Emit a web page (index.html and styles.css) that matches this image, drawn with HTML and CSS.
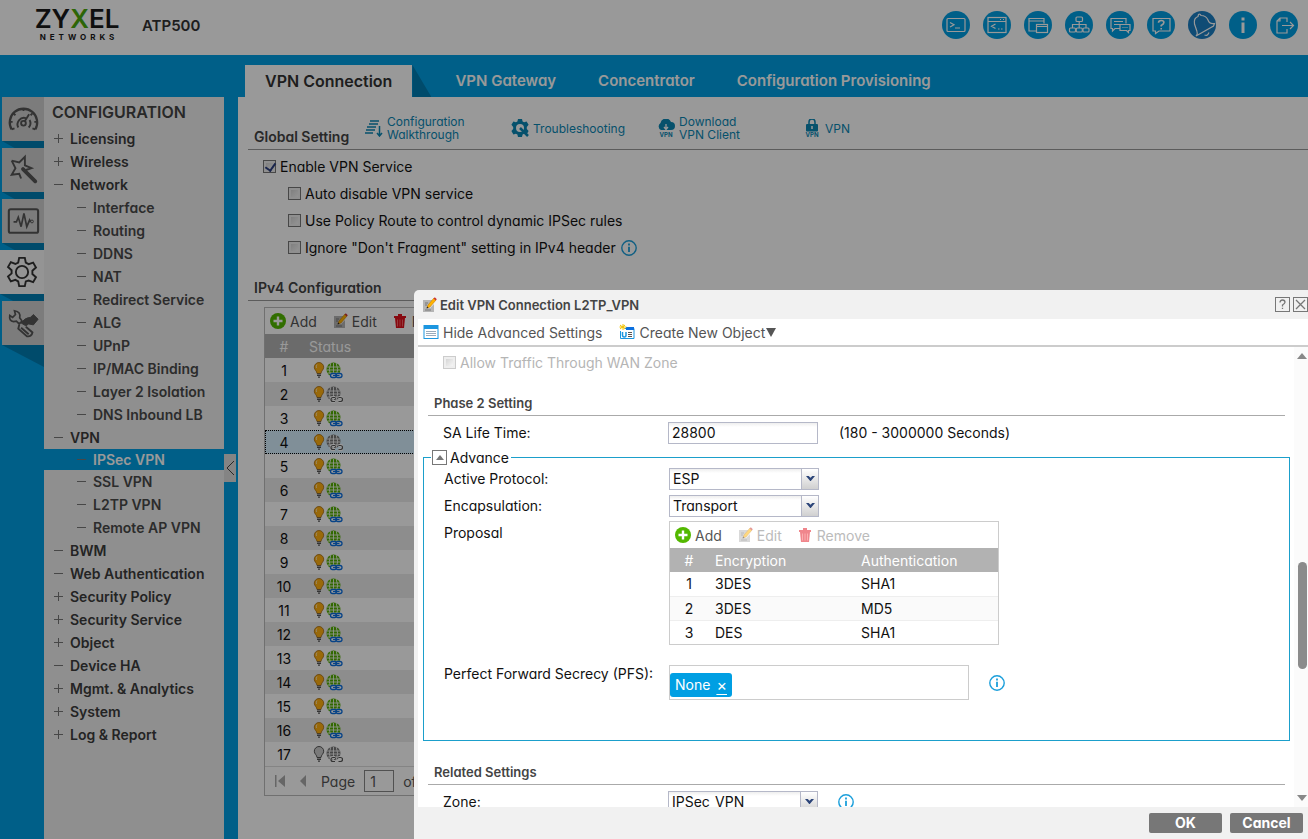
FILE: index.html
```html
<!DOCTYPE html>
<html lang="en">
<head>
    <meta charset="UTF-8">
    <meta name="viewport" content="width=device-width, initial-scale=1.0">
    <title>ATP500 - VPN Connection</title>
    <link rel="stylesheet" href="styles.css">
</head>
<body>
    <!-- Shared icons -->
    <svg class="sprite" aria-hidden="true">
        <symbol id="i-add" viewBox="0 0 16 16"><circle cx="8" cy="8" r="8" fill="#53b800"/><path d="M8 3.500v9M3.500 8h9" stroke="#fff" stroke-width="2.400"/></symbol>
        <symbol id="i-edit" viewBox="0 0 16 16"><path d="M2 3h9v2L7 9v2h2l4-4v8H2z" fill="#b5b5b5"/><path d="M4 6h3M4 8h2M4 13h6" stroke="#777"/><path d="M6 11l1-3 6-7 2 2-6 7z" fill="#ffb400" stroke="#c77a00" stroke-width=".6"/><path d="M12.600 1.400L13.800.3l2 2-1.100 1.100z" fill="#c33"/><path d="M5.500 11.500l.7-2 1.300 1.300z" fill="#222"/></symbol>
        <symbol id="i-trash" viewBox="0 0 16 16"><path d="M2 3h12v2H2zM6 1h4v2H6z" fill="#e2101c"/><path d="M3 5h10l-1 10H4z" fill="#e2101c"/><path d="M5.500 6.500v7M8 6.500v7M10.500 6.500v7" stroke="#f77" stroke-width=".8"/></symbol>
        <symbol id="i-bulb" viewBox="0 0 12 16"><path d="M6 .5a4.700 4.700 0 0 0-4.700 4.700C1.300 8 4 9 4 11.500h4C8 9 10.700 8 10.700 5.200A4.700 4.700 0 0 0 6 .5z" fill="currentColor" stroke="#a46a10" stroke-width=".8"/><path d="M4 2.500Q2.800 4 3.500 6" stroke="#fff" fill="none" opacity=".6"/><path d="M4 12h4M4 13.500h4M5 15.200h2" stroke="#555" stroke-width="1.200"/></symbol>
        <symbol id="i-bulb-off" viewBox="0 0 12 16"><path d="M6 .5a4.700 4.700 0 0 0-4.700 4.700C1.300 8 4 9 4 11.500h4C8 9 10.700 8 10.700 5.200A4.700 4.700 0 0 0 6 .5z" fill="#ccc" stroke="#555"/><path d="M4 12h4M4 13.500h4M5 15.200h2" stroke="#555" stroke-width="1.200"/></symbol>
        <symbol id="i-globe" viewBox="0 0 17 17"><circle cx="7.500" cy="7.500" r="7" fill="currentColor"/><path d="M1 5h13M.5 8h14M2 11h11M7.500 1v13M4.800 1q-3 6.500 0 13M10.200 1q3 6.500 0 13" fill="none" stroke="#fff" stroke-width=".8"/></symbol>
        <symbol id="i-link" viewBox="0 0 17 17"><rect x="4.500" y="11.500" width="6" height="4" rx="2" fill="#fff" stroke="#0b6fe0" stroke-width="1.300"/><rect x="10" y="11.500" width="6" height="4" rx="2" fill="#fff" stroke="#0b6fe0" stroke-width="1.300"/><path d="M7 13.500h6.500" stroke="#0b6fe0"/></symbol>
        <symbol id="i-unlink" viewBox="0 0 17 17"><path d="M9 11.500H7a2 2 0 0 0 0 4h2M12.500 11.500h2a2 2 0 0 1 0 4h-2" fill="none" stroke="#fff" stroke-width="3"/><path d="M9 11.500H7a2 2 0 0 0 0 4h2M12.500 11.500h2a2 2 0 0 1 0 4h-2" fill="none" stroke="#555" stroke-width="1.200"/></symbol>
        <symbol id="i-on" viewBox="0 0 30 17"><use href="#i-bulb" x="0" y="0" width="12" height="16" color="#ffb010"/><use href="#i-globe" x="13" y="0" width="17" height="17" color="#52ae00"/><use href="#i-link" x="13" y="0" width="17" height="17"/></symbol>
        <symbol id="i-half" viewBox="0 0 30 17"><use href="#i-bulb" x="0" y="0" width="12" height="16" color="#ffb010"/><use href="#i-globe" x="13" y="0" width="17" height="17" color="#777"/><use href="#i-unlink" x="13" y="0" width="17" height="17"/></symbol>
        <symbol id="i-off" viewBox="0 0 30 17"><use href="#i-bulb-off" x="0" y="0" width="12" height="16"/><use href="#i-globe" x="13" y="0" width="17" height="17" color="#777"/><use href="#i-unlink" x="13" y="0" width="17" height="17"/></symbol>
        <symbol id="i-info" viewBox="0 0 16 16"><circle cx="8" cy="8" r="7.200" fill="none" stroke="#1b9fdb" stroke-width="1.400"/><path d="M8 3.500v2M8 6.800V12" stroke="#1b9fdb" stroke-width="1.800"/></symbol>
    </svg>

    <header class="topbar">
        <div class="logo">
            <span class="logo-name">ZY<span class="logo-x">X</span>EL</span>
            <span class="logo-sub">NETWORKS</span>
        </div>
        <span class="model">ATP500</span>
        <div class="top-actions">
            <button class="round-btn" aria-label="Console"><svg viewBox="0 0 28 28"><rect x="5" y="7.500" width="18" height="13" rx="1"/><path d="M8 11.500l4 2.300-4 2.300M13 17h5"/></svg></button>
            <button class="round-btn" aria-label="CLI"><svg viewBox="0 0 28 28"><rect x="5" y="6.500" width="18" height="15"/><path d="M5 10.500h18M17 8.500h1M20 8.500h1M12.500 13l-4 2.300 4 2.300M15 18h1.500M18 18h1.500"/></svg></button>
            <button class="round-btn" aria-label="Windows"><svg viewBox="0 0 28 28"><path d="M12.500 20H5V7.500h15v5M5 10h15"/><rect x="12.500" y="13.500" width="11" height="8"/><path d="M12.500 15.500h11"/></svg></button>
            <button class="round-btn" aria-label="Site map"><svg viewBox="0 0 28 28"><rect x="11" y="6" width="6.500" height="4.500" rx="1"/><rect x="4.500" y="17" width="6" height="4" rx="1"/><rect x="11.300" y="17" width="6" height="4" rx="1"/><rect x="18" y="17" width="6" height="4" rx="1"/><path d="M14.200 10.500V17M7.500 17v-3.500h13.500V17"/></svg></button>
            <button class="round-btn" aria-label="Forum"><svg viewBox="0 0 28 28"><path d="M14 17.500H9L6.500 20v-2.500H5v-10h15v5M8 10.500h9M8 13.500h6"/><path d="M14 13.500h10v6h-1.500v2l-2-2H14zM16.500 16.500h1M18.500 16.500h1M20.500 16.500h1"/></svg></button>
            <button class="round-btn" aria-label="Help"><svg viewBox="0 0 28 28"><path d="M6 7.500h17v12.500H12L8.500 22.500V20H6z"/><path d="M11.500 11.800q0-2.300 2.700-2.300t2.700 2q0 1.500-2.700 3v1M14.200 17v1.500" stroke-width="1.600"/></svg></button>
            <button class="round-btn round-btn-light" aria-label="Notifications"><svg viewBox="0 0 28 28"><path d="M8 25q2-2 1-4.500L6.500 13Q5.500 7 10 5.500l.5-2q1.500-1 2.500 1 5 0 7 4.500 1.500 4.500 6.500 3.500l-1 2.500zM16.500 24q3 1.500 4.500-2.500"/></svg></button>
            <button class="round-btn" aria-label="About"><svg viewBox="0 0 28 28"><path d="M14 6.500v3M14 11.500v10.500" stroke-width="3"/></svg></button>
            <button class="round-btn" aria-label="Logout"><svg viewBox="0 0 28 28"><path d="M17 11V7h-7L7 10v12h10v-4M12 14.500h11M20 11l3.500 3.500L20 18M10 7v3H7"/></svg></button>
        </div>
    </header>

    <nav class="tabs">
        <a href="#" class="tab active">VPN Connection</a>
        <a href="#" class="tab">VPN Gateway</a>
        <a href="#" class="tab">Concentrator</a>
        <a href="#" class="tab">Configuration Provisioning</a>
    </nav>

    <div class="layout">
        <div class="rail">
            <button class="rail-btn" aria-label="Dashboard"><svg viewBox="0 0 36 36"><path d="M6 29a14.500 14.500 0 1 1 25 0" stroke-width="2.400"/><path d="M6 29l3-1M31 29l-3-1M4 21h3M30 21h3M8 12l2 2M18.500 6.500v3M28 12l-2 2M13 27a7 7 0 0 1 8-10M25 19a7 7 0 0 1-1 8M19.500 21l5-8" stroke-width="2"/><circle cx="18.500" cy="22.500" r="2.500" stroke-width="2"/></svg></button>
            <button class="rail-btn" aria-label="Quick setup"><svg viewBox="0 0 36 36"><path d="M6 8l8 2 6-6v9l7 3-6 2M6 8l4 8-4 7 8-1 2 5" stroke-width="2"/><path d="M18 17l13 13" stroke-width="4" stroke-linecap="round"/></svg></button>
            <button class="rail-btn" aria-label="Monitor"><svg viewBox="0 0 36 36"><rect x="3" y="5.500" width="31" height="25" rx="2" stroke-width="2.200"/><path d="M8 19h3l2-5 3 10 3-14 3 14 3-7 1 2" stroke-width="1.800"/><circle cx="27.500" cy="18.500" r="1.500"/></svg></button>
            <button class="rail-btn active" aria-label="Configuration"><svg viewBox="0 0 36 36"><path d="M15 3h6l1 5 3 1.700 4.800-1.600 3 5.200-3.800 3.400v3.400l3.800 3.400-3 5.200-4.800-1.600L22 28l-1 5h-6l-1-5-3-1.700-4.800 1.600-3-5.200L7 19.500v-3.400l-3.800-3.400 3-5.200L11 9.500 14 8z" stroke-width="2"/><circle cx="18" cy="18" r="6.500" stroke-width="2"/></svg></button>
            <button class="rail-btn" aria-label="Maintenance"><svg viewBox="0 0 36 36"><path d="M9 5l1 4-3 3-3-2q-1 6 4 6.500l3-.5 3 3 3-3-2.500-3.500Q16 6 9 5z" stroke-width="1.800"/><path d="M16 18q4-6 10-6l3-3 5 5-5 6-5-1-3 2z" fill="currentColor"/><path d="M16 23l8 7M14 20l-1 4 9 8q5 1 6-4l-7-6" stroke-width="2"/></svg></button>
        </div>

        <aside class="sidebar">
            <h1 class="sidebar-title">CONFIGURATION</h1>
            <ul class="menu">
                <li><a href="#" class="menu-link plus">Licensing</a></li>
                <li><a href="#" class="menu-link plus">Wireless</a></li>
                <li><a href="#" class="menu-link">Network</a>
                    <ul class="submenu">
                        <li><a href="#" class="menu-link">Interface</a></li>
                        <li><a href="#" class="menu-link">Routing</a></li>
                        <li><a href="#" class="menu-link">DDNS</a></li>
                        <li><a href="#" class="menu-link">NAT</a></li>
                        <li><a href="#" class="menu-link">Redirect Service</a></li>
                        <li><a href="#" class="menu-link">ALG</a></li>
                        <li><a href="#" class="menu-link">UPnP</a></li>
                        <li><a href="#" class="menu-link">IP/MAC Binding</a></li>
                        <li><a href="#" class="menu-link">Layer 2 Isolation</a></li>
                        <li><a href="#" class="menu-link">DNS Inbound LB</a></li>
                    </ul>
                </li>
                <li><a href="#" class="menu-link">VPN</a>
                    <ul class="submenu">
                        <li><a href="#" class="menu-link current">IPSec VPN</a></li>
                        <li><a href="#" class="menu-link">SSL VPN</a></li>
                        <li><a href="#" class="menu-link">L2TP VPN</a></li>
                        <li><a href="#" class="menu-link">Remote AP VPN</a></li>
                    </ul>
                </li>
                <li><a href="#" class="menu-link">BWM</a></li>
                <li><a href="#" class="menu-link">Web Authentication</a></li>
                <li><a href="#" class="menu-link plus">Security Policy</a></li>
                <li><a href="#" class="menu-link plus">Security Service</a></li>
                <li><a href="#" class="menu-link plus">Object</a></li>
                <li><a href="#" class="menu-link">Device HA</a></li>
                <li><a href="#" class="menu-link plus">Mgmt. &amp; Analytics</a></li>
                <li><a href="#" class="menu-link plus">System</a></li>
                <li><a href="#" class="menu-link plus">Log &amp; Report</a></li>
            </ul>
            <button class="collapse-btn" aria-label="Collapse menu"><svg viewBox="0 0 12 28"><path d="M10 7L3 14l7 7"/></svg></button>
        </aside>

        <main class="content">
            <div class="section-head section-head-tall">
                <h2 class="section-title">Global Setting</h2>
                <div class="quick-links">
                    <a href="#" class="quick-link"><svg viewBox="0 0 18 18"><path d="M5 2h9M4 5h9M2 8h9M1 11h9M0 14h8" stroke="currentColor" stroke-width="1.300"/><path d="M14.500 7v10M12 14l2.500 3 2.500-3" fill="none" stroke="currentColor" stroke-width="1.500"/></svg><span>Configuration<br>Walkthrough</span></a>
                    <a href="#" class="quick-link"><svg viewBox="0 0 18 18"><path fill="currentColor" fill-rule="evenodd" d="M7 0h4l.6 2.500 1.500.8L15.600 2.500l2 3.300L15.800 8v2l1.800 2-2 3.500-2.500-.8-1.500.8L11 18H7l-.6-2.500-1.500-.8-2.500.8-2-3.500L2.200 10V8L.4 5.800l2-3.300 2.500.8 1.500-.8zM9 5a4 4 0 1 0 0 8 4 4 0 0 0 0-8z"/><path d="M9 9l8 8" stroke="currentColor" stroke-width="2.500"/></svg><span>Troubleshooting</span></a>
                    <a href="#" class="quick-link"><svg viewBox="0 0 18 18"><path d="M4 11a4 4 0 0 1-.5-7A5.500 5.500 0 0 1 14 3a4 4 0 0 1 0 8z" fill="currentColor"/><path d="M9 5v5M7 8l2 2.500L11 8" fill="none" stroke="#fff" stroke-width="1.300"/><text x="9" y="18" class="icon-text">VPN</text></svg><span>Download<br>VPN Client</span></a>
                    <a href="#" class="quick-link"><svg viewBox="0 0 18 18"><rect x="3" y="5" width="12" height="7.500" rx="1" fill="currentColor"/><path d="M6 5V3a3 3 0 0 1 6 0v2" fill="none" stroke="currentColor" stroke-width="1.500"/><path d="M9 7v3" stroke="#fff" stroke-width="1.500"/><text x="9" y="18" class="icon-text">VPN</text></svg><span>VPN</span></a>
                </div>
            </div>
            <div class="options">
                <label class="check"><input type="checkbox" checked>Enable VPN Service</label>
                <label class="check check-sub"><input type="checkbox">Auto disable VPN service</label>
                <label class="check check-sub"><input type="checkbox">Use Policy Route to control dynamic IPSec rules</label>
                <label class="check check-sub"><input type="checkbox">Ignore "Don't Fragment" setting in IPv4 header<svg class="icon info"><use href="#i-info"/></svg></label>
            </div>

            <div class="section-head">
                <h2 class="section-title">IPv4 Configuration</h2>
            </div>
            <div class="grid grid-main">
                <div class="grid-tools">
                    <button class="tool"><svg class="icon"><use href="#i-add"/></svg>Add</button>
                    <button class="tool"><svg class="icon"><use href="#i-edit"/></svg>Edit</button>
                    <button class="tool"><svg class="icon"><use href="#i-trash"/></svg>Remove</button>
                </div>
                <table class="grid-table">
                    <thead><tr><th class="col-num">#</th><th>Status</th></tr></thead>
                    <tbody>
                        <tr><td class="col-num">1</td><td><svg class="status"><use href="#i-on"/></svg></td></tr>
                        <tr><td class="col-num">2</td><td><svg class="status"><use href="#i-half"/></svg></td></tr>
                        <tr><td class="col-num">3</td><td><svg class="status"><use href="#i-on"/></svg></td></tr>
                        <tr class="selected"><td class="col-num">4</td><td><svg class="status"><use href="#i-half"/></svg></td></tr>
                        <tr><td class="col-num">5</td><td><svg class="status"><use href="#i-on"/></svg></td></tr>
                        <tr><td class="col-num">6</td><td><svg class="status"><use href="#i-on"/></svg></td></tr>
                        <tr><td class="col-num">7</td><td><svg class="status"><use href="#i-on"/></svg></td></tr>
                        <tr><td class="col-num">8</td><td><svg class="status"><use href="#i-on"/></svg></td></tr>
                        <tr><td class="col-num">9</td><td><svg class="status"><use href="#i-on"/></svg></td></tr>
                        <tr><td class="col-num">10</td><td><svg class="status"><use href="#i-on"/></svg></td></tr>
                        <tr><td class="col-num">11</td><td><svg class="status"><use href="#i-on"/></svg></td></tr>
                        <tr><td class="col-num">12</td><td><svg class="status"><use href="#i-on"/></svg></td></tr>
                        <tr><td class="col-num">13</td><td><svg class="status"><use href="#i-on"/></svg></td></tr>
                        <tr><td class="col-num">14</td><td><svg class="status"><use href="#i-on"/></svg></td></tr>
                        <tr><td class="col-num">15</td><td><svg class="status"><use href="#i-on"/></svg></td></tr>
                        <tr><td class="col-num">16</td><td><svg class="status"><use href="#i-on"/></svg></td></tr>
                        <tr><td class="col-num">17</td><td><svg class="status"><use href="#i-off"/></svg></td></tr>
                    </tbody>
                </table>
                <div class="pager">
                    <button class="page-btn" aria-label="First page"><svg viewBox="0 0 10 14"><path d="M0 1h1.500v12H0zM10 1v12L3 7z"/></svg></button>
                    <button class="page-btn" aria-label="Previous page"><svg viewBox="0 0 10 14"><path d="M8 1v12L2 7z"/></svg></button>
                    <label for="page">Page</label>
                    <input id="page" class="page-input" type="text" value="1">
                    <span>of 1</span>
                </div>
            </div>
        </main>
    </div>

    <div class="backdrop"></div>

    <section class="dialog" role="dialog" aria-labelledby="dialog-title">
        <div class="dialog-head">
            <svg class="icon"><use href="#i-edit"/></svg>
            <h2 class="dialog-title" id="dialog-title">Edit VPN Connection L2TP_VPN</h2>
            <button class="box-btn" aria-label="Help"><svg viewBox="0 0 13 13"><path d="M4 4.500Q4 2 6.500 2T9 4.300q0 1.200-2.500 2.700v1.500M6.500 9.800V11"/></svg></button>
            <button class="box-btn" aria-label="Close"><svg viewBox="0 0 13 13"><path d="M2 2l9 9M11 2l-9 9"/></svg></button>
        </div>
        <div class="dialog-tools">
            <button class="tool"><svg class="icon" viewBox="0 0 16 16"><rect x="1" y="1.500" width="14" height="13" fill="#fff" stroke="#1b96e0"/><path d="M1 3.500h14" stroke="#1b96e0" stroke-width="3"/><path d="M3 7.500h10M3 9.500h10M3 11.500h10" stroke="#9ab"/></svg>Hide Advanced Settings</button>
            <button class="tool"><svg class="icon" viewBox="0 0 16 16"><path d="M6 4.500h9v10H1.500V7" fill="#fff" stroke="#1b96e0"/><path d="M7 4.500h8" stroke="#0b6fe0" stroke-width="3"/><path d="M3.500 8v3q0 2 1.800 2T7 11V8" fill="none" stroke="#1b96e0" stroke-width="1.500"/><path d="M9 8.500h4M9 10.500h4M9 12.500h4" stroke="#555"/><path d="M4 0v6M1 1l5 4M6 1L1 5M.5 3h7" stroke="#f2c200"/></svg>Create New Object<svg class="caret" viewBox="0 0 10 9"><path d="M0 0h10L5 9z"/></svg></button>
        </div>

        <div class="dialog-body">
            <form class="form">
                <label class="check check-disabled"><input type="checkbox" disabled>Allow Traffic Through WAN Zone</label>

                <h3 class="form-title">Phase 2 Setting</h3>
                <div class="row">
                    <label class="row-label" for="sa-life">SA Life Time:</label>
                    <input id="sa-life" class="text-input" type="text" value="28800">
                    <span class="hint">(180 - 3000000 Seconds)</span>
                </div>

                <fieldset class="advance">
                    <legend><button type="button" class="toggle-btn" aria-label="Collapse"><svg viewBox="0 0 8 5"><path d="M4 0l4 5H0z"/></svg></button>Advance</legend>
                    <div class="row">
                        <label class="row-label" for="protocol">Active Protocol:</label>
                        <span class="combo"><select id="protocol"><option>ESP</option><option>AH</option></select><span class="combo-arrow"><svg viewBox="0 0 10 6"><path d="M0 0h3l2 2 2-2h3L5 6z"/></svg></span></span>
                    </div>
                    <div class="row">
                        <label class="row-label" for="encap">Encapsulation:</label>
                        <span class="combo"><select id="encap"><option>Transport</option><option>Tunnel</option></select><span class="combo-arrow"><svg viewBox="0 0 10 6"><path d="M0 0h3l2 2 2-2h3L5 6z"/></svg></span></span>
                    </div>
                    <div class="row row-top">
                        <span class="row-label">Proposal</span>
                        <div class="grid grid-proposal">
                            <div class="grid-tools">
                                <button type="button" class="tool"><svg class="icon"><use href="#i-add"/></svg>Add</button>
                                <button type="button" class="tool" disabled><svg class="icon"><use href="#i-edit"/></svg>Edit</button>
                                <button type="button" class="tool" disabled><svg class="icon"><use href="#i-trash"/></svg>Remove</button>
                            </div>
                            <table class="grid-table">
                                <thead><tr><th class="col-num">#</th><th class="col-enc">Encryption</th><th>Authentication</th></tr></thead>
                                <tbody>
                                    <tr><td class="col-num">1</td><td>3DES</td><td>SHA1</td></tr>
                                    <tr><td class="col-num">2</td><td>3DES</td><td>MD5</td></tr>
                                    <tr><td class="col-num">3</td><td>DES</td><td>SHA1</td></tr>
                                </tbody>
                            </table>
                        </div>
                    </div>
                    <div class="row row-top row-pfs">
                        <span class="row-label">Perfect Forward Secrecy (PFS):</span>
                        <div class="tag-box"><span class="tag">None<button type="button" class="tag-remove" aria-label="Remove None">×</button></span></div>
                        <svg class="icon info"><use href="#i-info"/></svg>
                    </div>
                </fieldset>

                <h3 class="form-title">Related Settings</h3>
                <div class="row">
                    <label class="row-label" for="zone">Zone:</label>
                    <span class="combo"><select id="zone"><option>IPSec_VPN</option></select><span class="combo-arrow"><svg viewBox="0 0 10 6"><path d="M0 0h3l2 2 2-2h3L5 6z"/></svg></span></span>
                    <svg class="icon info"><use href="#i-info"/></svg>
                </div>
            </form>
            <div class="scrollbar">
                <svg viewBox="0 0 10 6"><path d="M5 0l5 6H0z"/></svg>
                <div class="scroll-track"><div class="scroll-thumb"></div></div>
                <svg viewBox="0 0 10 6"><path d="M0 0h10L5 6z"/></svg>
            </div>
        </div>

        <div class="dialog-foot">
            <button class="foot-btn">OK</button>
            <button class="foot-btn">Cancel</button>
        </div>
    </section>
</body>
</html>
```
FILE: styles.css
```css
:root {
    --blue: #009fe3;
    --blue-dark: #007db3;
    --text: #333;
    --gray: #b2b2b2;
}

* {
    margin: 0;
    padding: 0;
    box-sizing: border-box;
}

body {
    position: relative;
    display: flex;
    flex-direction: column;
    height: 100vh;
    overflow: hidden;
    background: var(--blue);
    color: #111;
    font-family: 'Inter', 'Century Gothic', sans-serif;
    font-size: 14px;
    font-feature-settings: "cv11";
}

button,
input,
select {
    font: inherit;
    font-feature-settings: inherit;
    color: inherit;
}

button {
    background: none;
    border: none;
    cursor: pointer;
}

a {
    text-decoration: none;
    color: inherit;
}

ul {
    list-style: none;
}

.sprite {
    position: absolute;
    width: 0;
    height: 0;
}

.icon {
    flex: none;
    width: 16px;
    height: 16px;
}

/* Top bar */
.topbar {
    display: flex;
    align-items: center;
    flex: none;
    height: 55px;
    padding: 0 10px 5px 32px;
    background: #fff;
}

.logo {
    display: flex;
    flex-direction: column;
    align-items: center;
    width: 90px;
    color: #1a1a1a;
}

.logo-name {
    font-size: 26px;
    font-weight: 600;
    line-height: 24px;
}

.logo-x {
    color: #4aa80c;
}

.logo-sub {
    font-size: 8px;
    font-weight: 700;
    line-height: 12px;
    letter-spacing: 4px;
    padding-left: 4px;
}

.model {
    margin-left: 20px;
    font-size: 15px;
    font-weight: 600;
    color: var(--text);
}

.top-actions {
    display: flex;
    gap: 13px;
    margin-left: auto;
}

.round-btn {
    width: 28px;
    height: 28px;
    border-radius: 50%;
    background: var(--blue);
    overflow: hidden;
}

.round-btn-light {
    background: #1c7fc4;
}

.round-btn svg {
    display: block;
    fill: none;
    stroke: #fff;
    stroke-width: 1.2;
}

/* Tabs */
.tabs {
    display: flex;
    align-items: flex-end;
    flex: none;
    height: 42px;
    padding-left: 245px;
}

.tab {
    padding: 0 21px;
    font-size: 15px;
    font-weight: 600;
    line-height: 32px;
    color: #fff;
}

.tab.active {
    position: relative;
    margin-right: 22px;
    padding: 0 20px;
    font-size: 16px;
    background: #fff;
    color: var(--text);
}

.tab.active::after {
    content: '';
    position: absolute;
    top: 0;
    left: 100%;
    width: 19px;
    height: 100%;
    background: var(--blue-dark);
    clip-path: polygon(0 0, 100% 100%, 0 100%);
}

.layout {
    display: flex;
    flex: 1;
    min-height: 0;
}

/* Icon rail */
.rail {
    display: flex;
    flex-direction: column;
    align-items: flex-end;
    gap: 7px;
    width: 44px;
}

.rail-btn {
    position: relative;
    display: flex;
    align-items: center;
    justify-content: center;
    width: 42px;
    height: 44px;
    background: #cfcfcf;
    color: #555;
}

.rail-btn::after {
    content: '';
    position: absolute;
    top: 100%;
    left: 0;
    width: 100%;
    height: 7px;
    background: var(--blue-dark);
    clip-path: polygon(0 0, 100% 0, 100% 100%, 30% 100%);
}

.rail-btn:last-child::after {
    height: 22px;
    clip-path: polygon(0 0, 100% 0, 100% 100%);
}

.rail-btn.active {
    width: 44px;
    background: #f7f7f7;
    color: var(--text);
}

.rail-btn svg {
    width: 34px;
    height: 34px;
    fill: none;
    stroke: currentColor;
}

/* Sidebar */
.sidebar {
    position: relative;
    width: 180px;
    margin-right: 14px;
    background: #efefef;
}

.sidebar-title {
    padding-left: 8px;
    font-size: 16px;
    font-weight: 600;
    line-height: 30px;
    color: #444;
}

.menu-link {
    display: flex;
    align-items: center;
    height: 23px;
    padding: 0 0 1px 10px;
    font-size: 14px;
    font-weight: 600;
    color: #3c3c3c;
}

.menu-link::before {
    content: '';
    width: 9px;
    height: 9px;
    margin-right: 7px;
    background: linear-gradient(#777, #777) center / 9px 1px no-repeat;
}

.menu-link.plus::before {
    background: linear-gradient(#777, #777) center / 9px 1px no-repeat, linear-gradient(#777, #777) center / 1px 9px no-repeat;
}

.submenu .menu-link {
    padding-left: 33px;
    color: #4a4a4a;
}

.submenu .menu-link.current {
    height: 21px;
    background: var(--blue);
    color: #fff;
}

.collapse-btn {
    position: absolute;
    top: 357px;
    left: 100%;
    width: 12px;
    height: 28px;
    background: #ddd;
}

.collapse-btn svg {
    display: block;
    fill: none;
    stroke: #444;
}

/* Main content */
.content {
    flex: 1;
    padding-left: 10px;
    background: #fff;
}

.section-head {
    display: flex;
    align-items: flex-end;
    height: 38px;
    padding-left: 6px;
    border-bottom: 1px solid #999;
}

.section-head-tall {
    height: 53px;
}

.section-title {
    width: 111px;
    font-size: 14px;
    font-weight: 600;
    line-height: 24px;
    color: #444;
    white-space: nowrap;
}

.quick-links {
    display: flex;
}

.quick-link {
    display: flex;
    align-items: center;
    gap: 4px;
    width: 146px;
    height: 42px;
    font-size: 12px;
    line-height: 13px;
    color: #0b87b5;
}

.quick-link svg {
    flex: none;
    width: 18px;
    height: 18px;
}

.icon-text {
    font-size: 6px;
    font-weight: 700;
    text-anchor: middle;
    fill: currentColor;
}

.options {
    padding: 3px 0 2px 15px;
}

.check {
    display: flex;
    align-items: center;
    gap: 4px;
    height: 27px;
}

.check-sub {
    margin-left: 25px;
}

.check input {
    appearance: none;
    width: 13px;
    height: 13px;
    border: 1px solid #777;
    background: linear-gradient(135deg, #ccc, #fff);
    box-shadow: inset 0 0 0 2px #eee;
}

.check input:checked::before {
    content: '';
    display: block;
    width: 5px;
    height: 8px;
    margin-left: 3px;
    border: solid #2c3f80;
    border-width: 0 2px 2px 0;
    transform: rotate(35deg);
}

.check-disabled {
    color: #b5b5b5;
}

.check-disabled input {
    border-color: #ccc;
}

/* Grids */
.grid {
    border: 1px solid #bbb;
    background: #fff;
}

.grid-main {
    margin: 6px 8px 0 16px;
}

.grid-tools {
    display: flex;
    align-items: center;
    gap: 15px;
    height: 26px;
    padding-left: 5px;
}

.tool {
    display: flex;
    align-items: center;
    gap: 4px;
    color: #555;
}

.tool:disabled {
    color: #bbb;
}

.tool:disabled .icon {
    opacity: 0.5;
}

.grid-table {
    width: 100%;
    border-collapse: collapse;
    table-layout: fixed;
}

.grid-table th {
    height: 24px;
    background: var(--gray);
    color: #fff;
    font-weight: 400;
    text-align: left;
}

.grid-table td {
    height: 24px;
}

.grid-table .col-num {
    width: 38px;
    text-align: center;
}

.grid-main th:last-child {
    padding-left: 6px;
}

.grid-main td:last-child {
    padding-left: 10px;
}

.grid-main tbody tr:nth-child(even) {
    background: #ebebeb;
}

.grid-main tbody tr.selected {
    background: #d5eefd;
    outline: 1px dotted #000;
    outline-offset: -1px;
}

.grid-main tbody tr.selected:nth-child(even) {
    background: #d5eefd;
}

.status {
    display: block;
    width: 30px;
    height: 17px;
}

.pager {
    display: flex;
    align-items: center;
    gap: 9px;
    height: 29px;
    padding-left: 10px;
    border-top: 1px solid #ddd;
    color: #555;
}

.page-btn {
    width: 14px;
    height: 14px;
}

.page-btn svg {
    display: block;
    width: 10px;
    fill: #aaa;
}

.page-input {
    width: 30px;
    height: 22px;
    padding: 0 5px;
    border: 1px solid #888;
    background: #fff;
}

/* Dialog */
.backdrop {
    position: absolute;
    inset: 0;
    background: rgba(0, 0, 0, 0.4);
}

.dialog {
    position: absolute;
    top: 290px;
    right: 0;
    bottom: 0;
    left: 414px;
    display: flex;
    flex-direction: column;
    padding-left: 4px;
    border-radius: 5px 0 0 0;
    background: #f1f1f1;
}

.dialog-head {
    display: flex;
    align-items: center;
    gap: 3px;
    flex: none;
    height: 29px;
    padding: 0 0 0 3px;
}

.dialog-title {
    margin-right: auto;
    font-size: 13px;
    font-weight: 600;
    color: #444;
}

.box-btn {
    width: 15px;
    height: 15px;
    border: 1px solid #777;
}

.box-btn svg {
    display: block;
    fill: none;
    stroke: #777;
    stroke-width: 1.3;
}

.dialog-tools {
    display: flex;
    align-items: center;
    gap: 17px;
    flex: none;
    height: 28px;
    padding-left: 5px;
    border-bottom: 2px solid #ccc;
    background: #fff;
}

.caret {
    width: 10px;
    height: 9px;
    margin-left: -3px;
    fill: #555;
}

.dialog-body {
    display: flex;
    flex: 1;
    min-height: 0;
    overflow: hidden;
    background: #fff;
}

.form {
    flex: 1;
    padding: 2px 4px 0 5px;
}

.form > .check {
    margin-left: 20px;
}

.form-title {
    margin: 16px 5px 0;
    padding-left: 6px;
    border-bottom: 1px solid #aaa;
    font-size: 13px;
    font-weight: 600;
    line-height: 23px;
    color: #444;
}

.row {
    display: flex;
    align-items: center;
    height: 27px;
}

.row-label {
    flex: none;
    width: 225px;
    line-height: 27px;
}

.form > .row {
    height: 33px;
    padding-left: 20px;
}

.text-input,
.combo {
    width: 150px;
    height: 22px;
    border: 1px solid #b5b8c8;
    background: linear-gradient(#eee, #fff 4px);
}

.text-input {
    padding: 0 3px;
}

.hint {
    margin-left: 21px;
}

.combo {
    position: relative;
    display: flex;
}

.combo select {
    appearance: none;
    width: 100%;
    padding: 0 20px 0 3px;
    border: none;
    background: none;
}

.combo-arrow {
    position: absolute;
    top: 0;
    right: 0;
    bottom: 0;
    display: flex;
    align-items: center;
    justify-content: center;
    width: 17px;
    border-left: 1px solid #b5b8c8;
    background: linear-gradient(#fff, #d0d0d0);
    pointer-events: none;
}

.combo-arrow svg {
    width: 9px;
    fill: #2b4478;
}

.advance {
    height: 292px;
    margin-bottom: 20px;
    padding: 0 0 0 20px;
    border: 1px solid #1b9fcb;
}

.advance legend {
    display: flex;
    align-items: center;
    gap: 3px;
    height: 16px;
    margin-left: -13px;
    padding: 0 2px 0 1px;
}

.toggle-btn {
    display: flex;
    align-items: center;
    justify-content: center;
    width: 15px;
    height: 15px;
    border: 1px solid #777;
}

.toggle-btn svg {
    width: 8px;
    fill: #777;
}

.row-top {
    align-items: flex-start;
    height: auto;
}

.grid-proposal {
    width: 330px;
    margin-top: 2px;
    border-color: #ccc;
}

.grid-proposal .col-enc {
    width: 146px;
}

.grid-proposal th,
.grid-proposal td {
    padding-left: 7px;
}

.grid-proposal .col-num {
    padding-left: 0;
}

.grid-proposal tbody tr + tr {
    border-top: 1px solid #eee;
}

.grid-proposal tbody tr:nth-child(even) {
    background: #fafafa;
}

.row-pfs {
    align-items: center;
    margin-top: 20px;
}

.row-pfs .row-label {
    align-self: flex-start;
    line-height: 18px;
}

.tag-box {
    display: flex;
    align-items: flex-end;
    width: 300px;
    height: 35px;
    padding-bottom: 2px;
    border: 1px solid #ccc;
}

.tag {
    display: flex;
    gap: 6px;
    padding: 0 5px;
    border-radius: 3px;
    background: var(--blue);
    color: #fff;
    line-height: 24px;
}

.tag-remove {
    font-size: 16px;
    text-decoration: underline;
    text-decoration-thickness: 1px;
    text-underline-offset: 3px;
}

.check > .info {
    margin-left: 1px;
}

.row > .info {
    margin: 0 20px;
}

.scrollbar {
    display: flex;
    flex-direction: column;
    align-items: flex-end;
    width: 14px;
    padding: 6px 1px 6px 0;
    background: #fbfbfb;
}

.scrollbar svg {
    width: 10px;
    height: 6px;
    fill: #888;
}

.scroll-track {
    flex: 1;
    width: 9px;
    padding-top: 203px;
}

.scroll-thumb {
    height: 107px;
    border-radius: 5px;
    background: #8b8b8b;
}

.dialog-foot {
    display: flex;
    align-items: center;
    justify-content: flex-end;
    gap: 8px;
    flex: none;
    height: 32px;
    padding-right: 5px;
}

.foot-btn {
    width: 73px;
    height: 20px;
    border-radius: 2px;
    background: #777;
    color: #fff;
    font-weight: 700;
    line-height: 20px;
}
```
